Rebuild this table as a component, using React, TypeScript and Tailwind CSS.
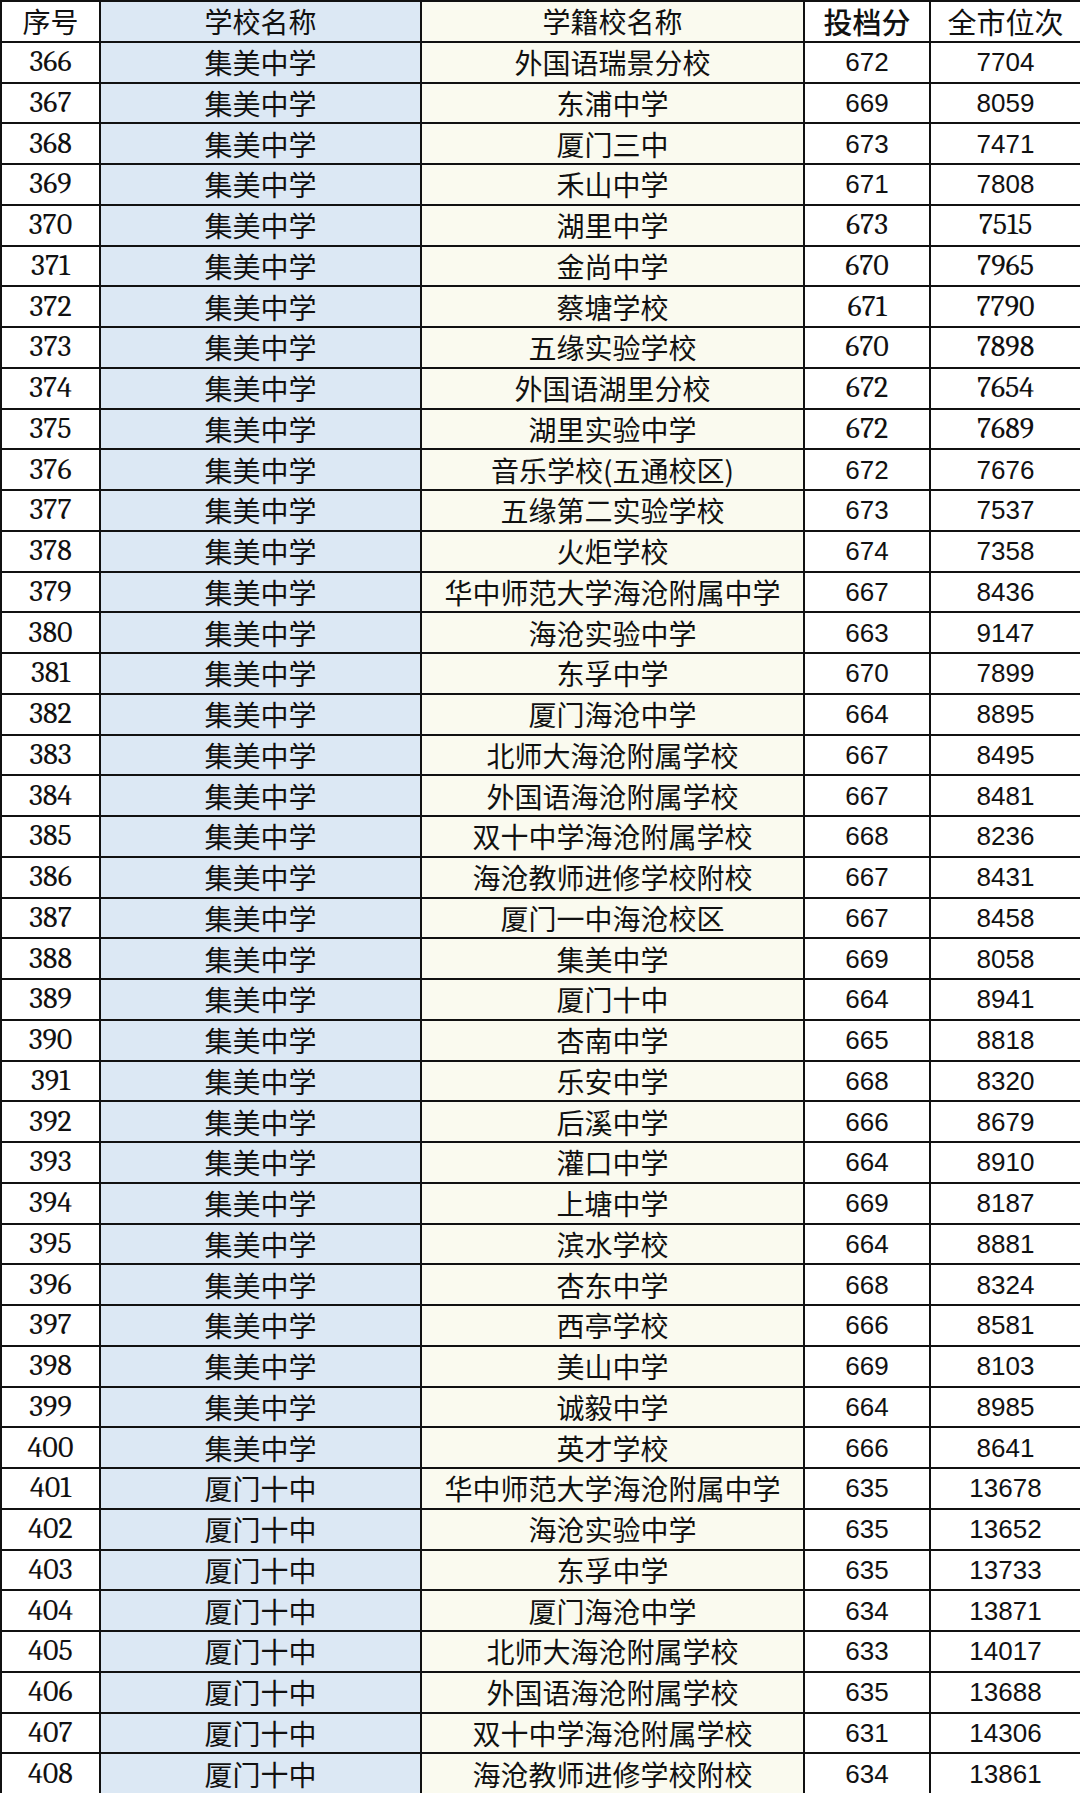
import React from 'react'

type Row = [number, string, string, number, number]

const rows: Row[] = [
  [366, '集美中学', '外国语瑞景分校', 672, 7704],
  [367, '集美中学', '东浦中学', 669, 8059],
  [368, '集美中学', '厦门三中', 673, 7471],
  [369, '集美中学', '禾山中学', 671, 7808],
  [370, '集美中学', '湖里中学', 673, 7515],
  [371, '集美中学', '金尚中学', 670, 7965],
  [372, '集美中学', '蔡塘学校', 671, 7790],
  [373, '集美中学', '五缘实验学校', 670, 7898],
  [374, '集美中学', '外国语湖里分校', 672, 7654],
  [375, '集美中学', '湖里实验中学', 672, 7689],
  [376, '集美中学', '音乐学校(五通校区)', 672, 7676],
  [377, '集美中学', '五缘第二实验学校', 673, 7537],
  [378, '集美中学', '火炬学校', 674, 7358],
  [379, '集美中学', '华中师范大学海沧附属中学', 667, 8436],
  [380, '集美中学', '海沧实验中学', 663, 9147],
  [381, '集美中学', '东孚中学', 670, 7899],
  [382, '集美中学', '厦门海沧中学', 664, 8895],
  [383, '集美中学', '北师大海沧附属学校', 667, 8495],
  [384, '集美中学', '外国语海沧附属学校', 667, 8481],
  [385, '集美中学', '双十中学海沧附属学校', 668, 8236],
  [386, '集美中学', '海沧教师进修学校附校', 667, 8431],
  [387, '集美中学', '厦门一中海沧校区', 667, 8458],
  [388, '集美中学', '集美中学', 669, 8058],
  [389, '集美中学', '厦门十中', 664, 8941],
  [390, '集美中学', '杏南中学', 665, 8818],
  [391, '集美中学', '乐安中学', 668, 8320],
  [392, '集美中学', '后溪中学', 666, 8679],
  [393, '集美中学', '灌口中学', 664, 8910],
  [394, '集美中学', '上塘中学', 669, 8187],
  [395, '集美中学', '滨水学校', 664, 8881],
  [396, '集美中学', '杏东中学', 668, 8324],
  [397, '集美中学', '西亭学校', 666, 8581],
  [398, '集美中学', '美山中学', 669, 8103],
  [399, '集美中学', '诚毅中学', 664, 8985],
  [400, '集美中学', '英才学校', 666, 8641],
  [401, '厦门十中', '华中师范大学海沧附属中学', 635, 13678],
  [402, '厦门十中', '海沧实验中学', 635, 13652],
  [403, '厦门十中', '东孚中学', 635, 13733],
  [404, '厦门十中', '厦门海沧中学', 634, 13871],
  [405, '厦门十中', '北师大海沧附属学校', 633, 14017],
  [406, '厦门十中', '外国语海沧附属学校', 635, 13688],
  [407, '厦门十中', '双十中学海沧附属学校', 631, 14306],
  [408, '厦门十中', '海沧教师进修学校附校', 634, 13861],
]

// rows 370–375 were typed in a serif face in the original sheet
const serifScore = (n: number) => n >= 370 && n <= 375

const cell = 'border-2 border-[#111] text-center align-middle p-0 leading-none'
const cjk = 'text-[28px] font-normal'
const serifNum = 'font-serif text-[30px] font-normal'
const sansNum = 'font-[Arial,sans-serif] text-[26px] font-normal'

export default function App() {
  return (
    <div className="w-[1080px] h-[1793px] bg-white text-[#111] overflow-hidden font-[Noto_Sans_CJK_SC,sans-serif]">
      <table className="w-[1080px] h-[1793px] table-fixed border-collapse">
        <colgroup>
          <col className="w-[99px]" />
          <col className="w-[321px]" />
          <col className="w-[383px]" />
          <col className="w-[126px]" />
          <col className="w-[151px]" />
        </colgroup>
        <thead>
          <tr className="h-[40.75px]">
            <th className={`${cell} ${cjk} bg-white`}>序号</th>
            <th className={`${cell} ${cjk} bg-[#dce8f4]`}>学校名称</th>
            <th className={`${cell} ${cjk} bg-[#fafaef]`}>学籍校名称</th>
            <th className={`${cell} text-[29px] font-medium bg-white`}>投档分</th>
            <th className={`${cell} text-[29px] font-normal bg-white`}>全市位次</th>
          </tr>
        </thead>
        <tbody>
          {rows.map(([no, school, origin, score, rank]) => {
            const num = serifScore(no) ? serifNum : sansNum
            return (
              <tr key={no} className="h-[40.75px]">
                <td className={`${cell} ${serifNum} bg-white`}>{no}</td>
                <td className={`${cell} ${cjk} bg-[#dce8f4]`}>{school}</td>
                <td className={`${cell} ${cjk} bg-[#fafaef]`}>{origin}</td>
                <td className={`${cell} ${num} bg-white`}>{score}</td>
                <td className={`${cell} ${num} bg-white`}>{rank}</td>
              </tr>
            )
          })}
        </tbody>
      </table>
    </div>
  )
}
